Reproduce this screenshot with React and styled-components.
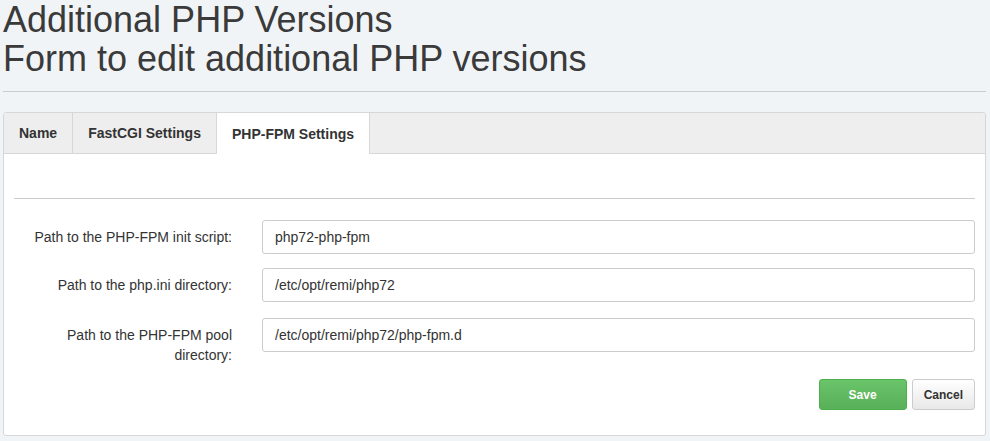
import React from 'react';
import styled, { createGlobalStyle } from 'styled-components';

const Global = createGlobalStyle`
  body { margin: 0; background: #f1f4f7; font-family: "Liberation Sans", Arial, sans-serif; color: #333; }
`;

const Page = styled.div`
  padding: 0 4px 0 3px;
`;

const Title = styled.h1`
  margin: 0;
  padding-top: 0;
  font-weight: 300;
  font-size: 36px;
  line-height: 39px;
  color: #3a3a3a;
  font-family: "Liberation Sans", Arial, sans-serif;
`;

const Rule = styled.hr`
  border: 0;
  border-top: 1px solid #c8ccd0;
  margin: 13px 0 20px;
`;

const Panel = styled.div`
  background: #fff;
  border: 1px solid #d7d7d7;
  border-radius: 3px;
  height: 324px;
  box-sizing: border-box;
`;

const TabBar = styled.div`
  display: flex;
  height: 40px;
  background: #eee;
  border-bottom: 1px solid #d7d7d7;
  border-radius: 3px 3px 0 0;
`;

const Tab = styled.div`
  display: flex;
  align-items: center;
  padding: 0 ${p => p.$pad}px;
  font-size: 14px;
  font-weight: bold;
  color: #333;
  border-right: 1px solid #d7d7d7;
  background: ${p => (p.$active ? '#fff' : 'transparent')};
  margin-bottom: ${p => (p.$active ? '-1px' : '0')};
`;

const Body = styled.div`
  padding: 44px 10px 0;
`;

const Inner = styled.hr`
  border: 0;
  border-top: 1px solid #ccc;
  margin: 0 0 21px;
`;

const Row = styled.div`
  display: grid;
  grid-template-columns: 218px 713px;
  column-gap: 30px;
  align-items: start;
  margin-bottom: ${p => p.$mb}px;
`;

const Label = styled.label`
  text-align: right;
  font-size: 14px;
  line-height: 20px;
  padding-top: 7px;
  color: #333;
`;

const Input = styled.input`
  height: 34px;
  box-sizing: border-box;
  border: 1px solid #ccc;
  border-radius: 3px;
  padding: 0 12px;
  font-size: 14px;
  font-family: "Liberation Sans", Arial, sans-serif;
  color: #333;
`;

const Actions = styled.div`
  display: flex;
  justify-content: flex-end;
  gap: 5px;
  margin-top: 14px;
`;

const Btn = styled.button`
  height: 31px;
  padding: 0 ${p => p.$pad}px;
  font-size: 12px;
  font-weight: bold;
  font-family: "Liberation Sans", Arial, sans-serif;
  border-radius: 3px;
  border: 1px solid ${p => (p.$primary ? '#4cae4c' : '#ccc')};
  color: ${p => (p.$primary ? '#fff' : '#333')};
  background: ${p => (p.$primary ? 'linear-gradient(#6ac46a, #58b058)' : 'linear-gradient(#fff, #e8e8e8)')};
`;

export default function App() {
  return (
    <Page>
      <Global />
      <Title>Additional PHP Versions<br />Form to edit additional PHP versions</Title>
      <Rule />
      <Panel>
        <TabBar>
          <Tab $pad={15}>Name</Tab>
          <Tab $pad={15}>FastCGI Settings</Tab>
          <Tab $pad={15} $active>PHP-FPM Settings</Tab>
        </TabBar>
        <Body>
          <Inner />
          <Row $mb={14}>
            <Label>Path to the PHP-FPM init script:</Label>
            <Input defaultValue="php72-php-fpm" />
          </Row>
          <Row $mb={16}>
            <Label>Path to the php.ini directory:</Label>
            <Input defaultValue="/etc/opt/remi/php72" />
          </Row>
          <Row $mb={0}>
            <Label>Path to the PHP-FPM pool directory:</Label>
            <Input defaultValue="/etc/opt/remi/php72/php-fpm.d" />
          </Row>
          <Actions>
            <Btn $primary $pad={29}>Save</Btn>
            <Btn $pad={11}>Cancel</Btn>
          </Actions>
        </Body>
      </Panel>
    </Page>
  );
}
